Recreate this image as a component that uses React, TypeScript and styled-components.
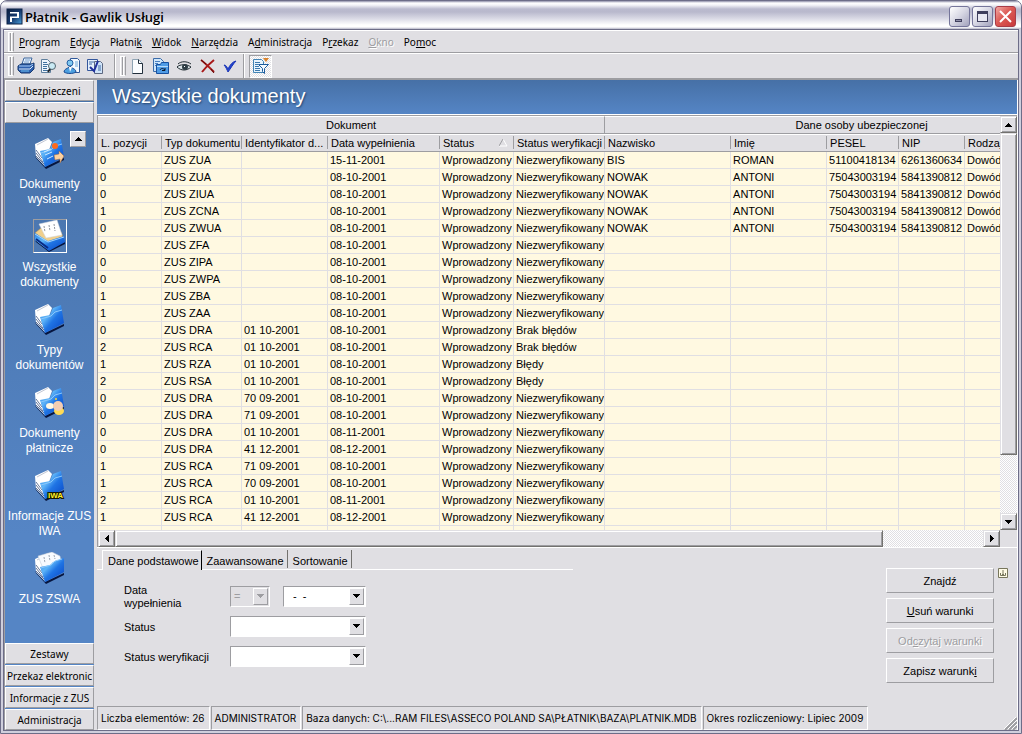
import React from "react";
import styled, { createGlobalStyle, css } from "styled-components";

const FACE = "#e0dfe3";
const SHADOW = "#9d9da1";
const FRAME = "#6d6d88";

const GlobalStyle = createGlobalStyle`
  * { box-sizing: border-box; }
  body {
    margin: 0;
    font: 11px/14px "Liberation Sans", Arial, sans-serif;
    color: #000;
    background: #fff;
  }
  button, input, select { font: inherit; color: inherit; margin: 0; padding: 0; border-radius: 0; }
`;

const raised = css`
  background: ${FACE};
  border: 1px solid;
  border-color: #fff ${SHADOW} ${SHADOW} #fff;
`;

const Frame = styled.div`
  min-height: 100vh;
  display: flex;
  flex-direction: column;
  border: 1px solid ${FRAME};
  border-radius: 7px 7px 0 0;
  background: #cfcfdd;
  overflow: hidden;
`;

const TitleBar = styled.header`
  display: flex;
  align-items: center;
  height: 28px;
  padding: 3px 5px 0 5px;
  gap: 2px;
  background: linear-gradient(#8e8ea8 0, #fff 2px, #f4f4f8 4px, #babace 8px, #b9b9cd 11px, #dcdce7 18px, #fff 24px, #fff 26px, #b5b5c6 28px);
`;

const Title = styled.h1`
  flex: 1;
  margin: 0;
  font: 600 13px/18px "Open Sans", sans-serif;
`;

const CaptionButton = styled.button<{ $close?: boolean }>`
  width: 21px;
  height: 21px;
  display: grid;
  place-items: center;
  border: 1px solid ${(p) => (p.$close ? "#a83c48" : "#75759a")};
  border-radius: 3px;
  background: ${(p) =>
    p.$close
      ? "linear-gradient(135deg, #f2a9a4, #dc5a55 45%, #c8393c)"
      : "linear-gradient(135deg, #fff, #d6d6e3 50%, #a2a2bc)"};
`;

const Client = styled.div`
  flex: 1;
  display: flex;
  flex-direction: column;
  margin: 0 2px 2px;
  border: 1px solid ${FRAME};
  background: ${FACE};
`;

const MenuBar = styled.nav`
  display: flex;
  align-items: center;
  height: 23px;
  padding-left: 4px;
  border-top: 1px solid #fff;
  border-bottom: 1px solid ${SHADOW};
`;

const MenuList = styled.div`
  display: flex;
  gap: 10px;
  padding-left: 5px;
`;

const MenuItem = styled.button`
  border: 0;
  background: none;
  height: 18px;
  font: 10px/18px "Noto Sans", sans-serif;
  &:disabled { color: ${SHADOW}; text-shadow: 1px 1px #fff; }
`;

const Grip = styled.span`
  width: 6px;
  height: 20px;
  border: 1px solid;
  border-color: #fff ${SHADOW} #fff #fff;
  background: linear-gradient(90deg, ${FACE} 0 1px, ${SHADOW} 1px 2px, #fff 2px 3px, ${FACE} 3px);
`;

const ToolBar = styled.div`
  display: flex;
  align-items: center;
  height: 27px;
  padding-left: 4px;
  border-top: 1px solid #fff;
  border-bottom: 2px solid ${SHADOW};
`;

const dither = css`
  background: repeating-conic-gradient(#fff 0 25%, ${FACE} 0 50%) 0 0 / 2px 2px;
`;

const ToolButton = styled.button<{ $on?: boolean }>`
  width: 23px;
  height: 23px;
  display: grid;
  place-items: center;
  border: 1px solid transparent;
  background: none;
  ${(p) =>
    p.$on &&
    css`
      ${dither}
      border-color: ${SHADOW} #fff #fff ${SHADOW};
    `}
`;

const ToolSeparator = styled.span<{ $before: number }>`
  width: 2px;
  height: 24px;
  margin: 0 4px 0 ${(p) => p.$before}px;
  border-left: 1px solid ${SHADOW};
  border-right: 1px solid #fff;
`;

const Body = styled.div`
  flex: 1;
  display: flex;
  gap: 3px;
  border-left: 1px solid ${SHADOW};
  border-right: 1px solid #fff;
`;

const Sidebar = styled.aside`
  width: 89px;
  flex: none;
  display: flex;
  flex-direction: column;
  gap: 1px;
  background: linear-gradient(#4771a8, #5585c5 70%);
`;

const SideTab = styled.button`
  ${raised}
  height: 21px;
  font: 10px/18px "Noto Sans", sans-serif;
  overflow: hidden;
  white-space: nowrap;
  text-align: center;
`;

const SideList = styled.div`
  position: relative;
  flex: 1;
  display: flex;
  flex-direction: column;
  gap: 12px;
  padding-top: 12px;
`;

const SideItem = styled.a<{ $selected?: boolean }>`
  display: flex;
  flex-direction: column;
  align-items: center;
  gap: 7px;
  color: #fff;
  text-decoration: none;
  text-align: center;
  font-size: 12px;
  line-height: 15px;
  white-space: pre-line;
  svg {
    border: 1px solid;
    border-color: ${(p) => (p.$selected ? "#9d9da1 #fff #fff #9d9da1" : "transparent")};
  }
`;

const ScrollUp = styled.button`
  ${raised}
  position: absolute;
  top: 7px;
  right: 8px;
  width: 16px;
  height: 16px;
  display: grid;
  place-items: center;
`;

const Main = styled.main`
  flex: 1;
  min-width: 0;
  display: flex;
  flex-direction: column;
`;

const Banner = styled.h2`
  margin: 0;
  height: 35px;
  padding-left: 15px;
  border-bottom: 1px solid #fff;
  background: linear-gradient(#4670a6, #5585c5);
  color: #fff;
  font-size: 20px;
  line-height: 32px;
  font-weight: 400;
  text-shadow: 1px 1px 2px #23456f;
`;

const GridPane = styled.section`
  flex: 1 1 0;
  min-height: 240px;
  display: grid;
  grid-template-columns: minmax(0, 1fr) 17px;
  grid-template-rows: minmax(0, 1fr) 17px;
  border-top: 1px solid ${SHADOW};
  border-left: 1px solid ${SHADOW};
`;

const Viewport = styled.div`
  overflow: hidden;
  background: #fff9e1;
`;

const DataTable = styled.table`
  width: 1021px;
  table-layout: fixed;
  border-collapse: separate;
  border-spacing: 0;
`;

const GroupHead = styled.th`
  height: 18px;
  padding: 0;
  font-weight: 400;
  line-height: 14px;
  background: ${FACE};
  border-top: 1px solid #fff;
  border-right: 1px solid ${SHADOW};
  border-bottom: 1px solid ${SHADOW};
`;

const Head = styled.th`
  height: 18px;
  padding: 0 0 0 3px;
  font-weight: 400;
  line-height: 14px;
  text-align: left;
  white-space: nowrap;
  overflow: hidden;
  border-bottom: 1px solid ${SHADOW};
  border-top: 1px solid #fff;
  background: linear-gradient(${SHADOW}, ${SHADOW}) right 0 top 1px / 1px 13px no-repeat ${FACE};
  svg { float: right; margin: 3px 6px 0 0; }
`;

const Cell = styled.td`
  height: 17px;
  padding: 0 0 0 2px;
  line-height: 16px;
  white-space: nowrap;
  overflow: hidden;
  background: #fff9e1;
  border-right: 1px solid ${FACE};
  border-bottom: 1px solid ${FACE};
`;

const ScrollBar = styled.div<{ $vertical?: boolean }>`
  display: flex;
  flex-direction: ${(p) => (p.$vertical ? "column" : "row")};
  ${dither}
`;

const scrollPart = css`
  background: ${FACE};
  border: 1px solid;
  border-color: ${FACE} #73726f #73726f ${FACE};
  box-shadow: inset 1px 1px #fff, inset -1px -1px ${SHADOW};
`;

const ScrollArrow = styled.button`
  ${scrollPart}
  width: 17px;
  height: 17px;
  flex: none;
  display: grid;
  place-items: center;
`;

const Thumb = styled.div<{ $share: number }>`
  ${scrollPart}
  flex: ${(p) => p.$share} 0 0;
`;

const Track = styled.div<{ $share: number }>`
  flex: ${(p) => p.$share} 0 0;
`;

const Panel = styled.section`
  display: flex;
  justify-content: space-between;
  min-height: 159px;
  border-top: 1px solid #fff;
`;

const Criteria = styled.div`
  width: 476px;
`;

const Tabs = styled.div`
  display: flex;
  align-items: flex-start;
  padding: 2px 0 0 5px;
  height: 22px;
  background: linear-gradient(#fff, #fff) left bottom / 100% 1px no-repeat;
`;

const Tab = styled.button<{ $active?: boolean }>`
  height: ${(p) => (p.$active ? 20 : 18)}px;
  padding: 3px 3px 0 5px;
  border: 0;
  border-right: 1px solid ${(p) => (p.$active ? "#000" : "#73726f")};
  background: ${FACE};
  ${(p) =>
    p.$active &&
    css`
      border-top: 1px solid #fff;
      border-left: 1px solid #fff;
      padding: 1px 2px 0 5px;
    `}
`;

const Form = styled.form`
  display: grid;
  grid-template-columns: 106px 136px;
  grid-auto-rows: 20px;
  row-gap: 10px;
  align-items: center;
  padding: 16px 0 0 27px;
`;

const FieldLabel = styled.label`
  padding-top: 2px;
  line-height: 13px;
  white-space: pre-line;
`;

const FieldRow = styled.div`
  display: flex;
  justify-content: space-between;
`;

const Combo = styled.span<{ $width: number; $disabled?: boolean }>`
  display: flex;
  width: ${(p) => p.$width}px;
  height: 21px;
  padding: 1px;
  border: 1px solid;
  border-color: ${SHADOW} #fff #fff ${SHADOW};
  background: ${(p) => (p.$disabled ? FACE : "#fff")};
  position: relative;
  select, input {
    flex: 1;
    width: 100%;
    min-width: 0;
    appearance: none;
    border: 0;
    outline: 0;
    padding-left: 2px;
    background: transparent;
    color: ${(p) => (p.$disabled ? SHADOW : "#000")};
    opacity: 1;
  }
  input { padding-left: 8px; }
`;

const DropMark = styled.span`
  ${raised}
  position: absolute;
  top: 1px;
  right: 1px;
  bottom: 1px;
  width: 15px;
  display: grid;
  place-items: center;
  pointer-events: none;
`;

const Actions = styled.div`
  display: flex;
  gap: 4px;
  padding: 20px 9px 0 0;
`;

const ButtonStack = styled.div`
  display: flex;
  flex-direction: column;
  gap: 5px;
`;

const PushButton = styled.button`
  ${raised}
  width: 108px;
  height: 25px;
  &:disabled { color: ${SHADOW}; text-shadow: 1px 1px #fff; }
`;

const PinButton = styled.button`
  width: 10px;
  height: 11px;
  border: 0;
  background: none;
  display: block;
  svg { display: block; }
`;

const StatusBar = styled.footer`
  display: flex;
  gap: 1px;
  height: 24px;
  font: 10px/22px Inter, sans-serif;
  white-space: nowrap;
`;

const StatusCell = styled.span`
  padding: 0 4px 0 3px;
  border: 1px solid;
  border-color: ${SHADOW} #fff #fff ${SHADOW};
`;

const SizeGrip = styled.svg`
  margin: auto 0 0 auto;
`;

type Dir = "up" | "down" | "left" | "right";
const arrows: Record<Dir, [number, number, string]> = {
  up: [7, 4, "M3 0h1v1h1v1h1v1h1v1H0V3h1V2h1V1h1z"],
  down: [7, 4, "M0 0h7v1H6v1H5v1H4v1H3V3H2V2H1V1H0z"],
  left: [4, 7, "M4 0v7H3V6H2V5H1V4H0V3h1V2h1V1h1V0z"],
  right: [4, 7, "M0 0h1v1h1v1h1v1h1v1H3v1H2v1H1v1H0z"],
};

const Arrow = ({ dir, color = "#000" }: { dir: Dir; color?: string }) => {
  const [w, h, d] = arrows[dir];
  return (
    <svg width={w} height={h} viewBox={`0 0 ${w} ${h}`} shapeRendering="crispEdges">
      <path d={d} fill={color} />
    </svg>
  );
};

const Icon16 = ({ children }: { children: React.ReactNode }) => (
  <svg width="18" height="18" viewBox="0 0 18 18" fill="none">
    {children}
  </svg>
);

const AppLogo = () => (
  <svg width="17" height="17" viewBox="0 0 17 17">
    <defs>
      <linearGradient id="logo" x1="0" y1="0" x2="1" y2="1">
        <stop offset="0" stopColor="#0b1c3c" />
        <stop offset="0.5" stopColor="#16396d" />
        <stop offset="1" stopColor="#4aa0dc" />
      </linearGradient>
    </defs>
    <rect x="1" y="1" width="15" height="15" fill="url(#logo)" stroke="#0d2347" />
    <path d="M4 4h9v6H6v4H4V8.500h7V5.500H4z" fill="#fff" />
  </svg>
);

const PrinterIcon = () => (
  <Icon16>
    <path d="M5 7 7 1h8l-2 6z" fill="#e8f1fb" stroke="#3c669d" />
    <path d="M8 3h5M7 5h5" stroke="#77a0d0" />
    <path d="M1 9 4 7h10l3-1v6l-4 4H4l-3-3z" fill="#2d5fae" stroke="#17396f" />
    <path d="M2 9h11l3-2" stroke="#a9cdf5" />
    <path d="M2 12h11l3-3" stroke="#dcebfb" />
    <path d="M4 14h8" stroke="#6ec0ee" />
  </Icon16>
);

const PreviewIcon = () => (
  <Icon16>
    <path d="M1.500 2.500h6l3 3v10h-9z" fill="#eef5fc" stroke="#5f7f9d" />
    <path d="M3 5.500h4M3 7.500h5M3 9.500h4M3 11.500h4M3 13.500h5" stroke="#41719f" />
    <circle cx="12" cy="9" r="3.500" fill="#c9eaf4" stroke="#52646e" />
    <path d="m10 12-2 3" stroke="#222" strokeWidth="2" />
  </Icon16>
);

const PersonIcon = () => (
  <Icon16>
    <path d="M7.500 1.500h7l2 2v12h-9z" fill="#f3f9ff" stroke="#31599a" />
    <path d="M12 5h3M12 7h3M12 9h3" stroke="#6ea8d8" />
    <circle cx="7" cy="6" r="3" fill="#7fc8f1" stroke="#2460a4" />
    <path d="M1 15c0-3 3-3 5-5h2c2 2 5 2 5 5-3 2-9 2-12 0z" fill="#4b9fe0" stroke="#1d4c91" />
    <path d="m6 10 1 5 2-5" fill="#fff" />
  </Icon16>
);

const CheckedDocIcon = () => (
  <Icon16>
    <path d="M1.500 2.500h10v11h-10z" fill="#e2eefb" stroke="#34579c" />
    <path d="M8.500 4.500h6l2 2v10h-8z" fill="#cfe3f8" stroke="#5c6780" />
    <path d="M3 5h5M3 7h3M12 9h3M12 11h3M12 13h3" stroke="#426aa6" />
    <path d="m4 10 4 4 4-10" stroke="#20309b" strokeWidth="2" />
  </Icon16>
);

const NewIcon = () => (
  <Icon16>
    <path d="M3.500 2.500h6l4 4v10h-10z" fill="#fbfdff" stroke="#8fa4b4" />
    <path d="M9.500 2.500v4h4v10h-10" stroke="#222f3c" />
  </Icon16>
);

const FolderDocIcon = () => (
  <Icon16>
    <path d="M1.500 1.500h7l3 3v10h-10z" fill="#cfe6fa" stroke="#3b6caa" />
    <path d="M3 4.500h5M3 6.500h3M3 8.500h3" stroke="#477fc0" />
    <path d="M4.500 7.500h4l1-2h7v11h-12z" fill="#4f9ce6" stroke="#17509f" />
    <path d="M5 9.500h11" stroke="#b5dbfb" />
    <path d="M8 13c1-2 3-2 5 0m0-2v2.500h-3" stroke="#08172d" />
  </Icon16>
);

const EyeIcon = () => (
  <Icon16>
    <path d="M3 7c3-3 9-3 13 0" stroke="#222d33" />
    <path d="M2 10c3-3 10-3 14 0-4 4-10 4-14 0z" fill="#dce5e8" stroke="#222d33" />
    <circle cx="10" cy="10" r="3" fill="#2e3d45" />
    <path d="M9 9h1v1H9z" fill="#fff" />
  </Icon16>
);

const DeleteIcon = () => (
  <Icon16>
    <path d="M3 3c4 3 9 8 13 12M16 3C11 7 7 11 4 15" stroke="#a81818" strokeWidth="2" />
    <path d="m3 3 5 4M16 16l-3-4" stroke="#5b0909" />
  </Icon16>
);

const CheckIcon = () => (
  <Icon16>
    <path d="M3 8c2 0 3 2 4 4 2-4 4-7 8-8-3 3-5 7-8 11-1-2-2-5-4-7z" fill="#2345d0" stroke="#1a35b6" />
  </Icon16>
);

const FilterIcon = () => (
  <Icon16>
    <path d="M1.500 2.500h8l2 2v11h-10z" fill="#e8f4fd" stroke="#4284b5" />
    <path d="M3 5.500h5M3 7.500h3M3 9.500h4M3 11.500h5M3 13.500h5" stroke="#3b79ad" />
    <path d="M6.500 7.500h10l-4 4v5l-2-2v-3z" fill="#f5fbff" stroke="#1c5b9c" />
    <path d="M11 1h6l-3 4z" fill="#d9822c" />
  </Icon16>
);

type FolderKind = "sent" | "all" | "types" | "pay" | "iwa" | "zswa";

const FolderIcon = ({ kind }: { kind: FolderKind }) => (
  <svg width="34" height="34" viewBox="0 0 32 32" fill="none">
    <defs>
      <linearGradient id={`f-${kind}`} x1="0" y1="0" x2="1" y2="1">
        <stop offset="0" stopColor="#2f86e6" />
        <stop offset="0.35" stopColor="#5db4f8" />
        <stop offset="0.55" stopColor="#1f74e4" />
        <stop offset="1" stopColor="#0642c4" />
      </linearGradient>
    </defs>
    {kind === "all" ? (
      <>
        <path d="m1 20 13 10 17-8v2l-16 8L2 22z" fill="#05133c" />
        <path d="m1 13 6-5 20 4 2 5-15 6z" fill="#f0cf8c" stroke="#b98d45" strokeWidth="0.5" />
        <path d="m5 4 18-4 5 15-16 3z" fill="#fff" stroke="#cfd4dc" strokeWidth="0.5" />
        <path d="m10 6 1 6m4-7 1 6m4-7 1 7" stroke="#8f959e" strokeDasharray="2 1" />
        <path d="m1 13 13 8 16-5 1 6-16 9L1 20z" fill="url(#f-all)" />
        <path d="m1 14 13 8 16-5" stroke="#a5d4fb" />
        <path d="m2 19 12 9" stroke="#0a2c85" strokeWidth="2" />
      </>
    ) : (
      <>
        <path d="m1 19 10 11 19-9v2l-18 9L2 21z" fill="#06153f" />
        <path d="m1 7 13-6 4 4-3 8-8 3 4 13-9-9z" fill="#fff" />
        <path d="m2 13 6 8M2 16l7 9M2 19l8 8" stroke="#66779a" />
        <path d="m3 8 11-6" stroke="#c3c8d4" />
        {kind === "zswa" && (
          <>
            <path d="m4 4 14-4 8 4 2 10-18 5z" fill="#f8fbff" stroke="#bcc4d0" strokeWidth="0.5" />
            <path d="m10 5 1 6m4-8 1 6m4-6 1 4" stroke="#9aa4b2" strokeDasharray="2 1" />
          </>
        )}
        {kind === "zswa" ? (
          <path d="m6 15 10-2 3-3 11-4v14l-19 10z" fill="url(#f-zswa)" />
        ) : (
          <path d="m6 14 10-2 3-7 8-3 3 18-19 10z" fill={`url(#f-${kind})`} />
        )}
        <path d="m7 16 10-3 4-4 7-2" stroke="#8cc8fb" />
      </>
    )}
    {kind === "sent" && (
      <>
        <circle cx="21" cy="9" r="3" fill="#ff6a1c" />
        <path d="m10 15 7-3M11 18l7-3M13 22l6-3" stroke="#cfe9ff" />
        <path d="m20 18 5-1v-3l5 5-4 7v-4l-5 1z" fill="#fbd1a0" stroke="#a46a3d" strokeWidth="0.5" />
      </>
    )}
    {kind === "pay" && (
      <>
        <ellipse cx="16" cy="20" rx="4" ry="3" fill="#fff8e4" />
        <ellipse cx="25" cy="25" rx="5" ry="4" fill="#ffdb55" />
        <circle cx="24" cy="20" r="5" fill="#f3cdb3" />
        <circle cx="22" cy="13" r="1" fill="#ffd83a" />
      </>
    )}
    {kind === "iwa" && (
      <text x="14" y="29" fill="#ffef2b" stroke="#171700" strokeWidth="2" paintOrder="stroke" fontSize="8" fontWeight="700">
        IWA
      </text>
    )}
  </svg>
);

const menu: [string, string, string][] = [
  ["", "P", "rogram"],
  ["", "E", "dycja"],
  ["Płatni", "k", ""],
  ["", "W", "idok"],
  ["", "N", "arzędzia"],
  ["A", "d", "ministracja"],
  ["P", "r", "zekaz"],
  ["", "O", "kno"],
  ["Po", "m", "oc"],
];

const sideItems: [string, FolderKind][] = [
  ["Dokumenty\nwysłane", "sent"],
  ["Wszystkie\ndokumenty", "all"],
  ["Typy\ndokumentów", "types"],
  ["Dokumenty\npłatnicze", "pay"],
  ["Informacje ZUS\nIWA", "iwa"],
  ["ZUS ZSWA", "zswa"],
];

const columns: [string, number][] = [
  ["L. pozycji", 64],
  ["Typ dokumentu", 80],
  ["Identyfikator d...", 86],
  ["Data wypełnienia", 112],
  ["Status", 74],
  ["Status weryfikacji", 91],
  ["Nazwisko", 126],
  ["Imię", 96],
  ["PESEL", 72],
  ["NIP", 66],
  ["Rodzaj", 154],
];

const W = "Wprowadzony";
const N = "Niezweryfikowany";
const nowak = ["NOWAK", "ANTONI", "75043003194", "5841390812", "Dowód"];
const none = ["", "", "", "", ""];

const rows: string[][] = [
  ["0", "ZUS ZUA", "", "15-11-2001", W, N, "BIS", "ROMAN", "51100418134", "6261360634", "Dowód"],
  ["0", "ZUS ZUA", "", "08-10-2001", W, N, ...nowak],
  ["0", "ZUS ZIUA", "", "08-10-2001", W, N, ...nowak],
  ["1", "ZUS ZCNA", "", "08-10-2001", W, N, ...nowak],
  ["0", "ZUS ZWUA", "", "08-10-2001", W, N, ...nowak],
  ["0", "ZUS ZFA", "", "08-10-2001", W, N, ...none],
  ["0", "ZUS ZIPA", "", "08-10-2001", W, N, ...none],
  ["0", "ZUS ZWPA", "", "08-10-2001", W, N, ...none],
  ["1", "ZUS ZBA", "", "08-10-2001", W, N, ...none],
  ["1", "ZUS ZAA", "", "08-10-2001", W, N, ...none],
  ["0", "ZUS DRA", "01 10-2001", "08-10-2001", W, "Brak błędów", ...none],
  ["2", "ZUS RCA", "01 10-2001", "08-10-2001", W, "Brak błędów", ...none],
  ["1", "ZUS RZA", "01 10-2001", "08-10-2001", W, "Błędy", ...none],
  ["2", "ZUS RSA", "01 10-2001", "08-10-2001", W, "Błędy", ...none],
  ["0", "ZUS DRA", "70 09-2001", "08-10-2001", W, N, ...none],
  ["0", "ZUS DRA", "71 09-2001", "08-10-2001", W, N, ...none],
  ["0", "ZUS DRA", "01 10-2001", "08-11-2001", W, N, ...none],
  ["0", "ZUS DRA", "41 12-2001", "08-12-2001", W, N, ...none],
  ["1", "ZUS RCA", "71 09-2001", "08-10-2001", W, N, ...none],
  ["1", "ZUS RCA", "70 09-2001", "08-10-2001", W, N, ...none],
  ["2", "ZUS RCA", "01 10-2001", "08-11-2001", W, N, ...none],
  ["1", "ZUS RCA", "41 12-2001", "08-12-2001", W, N, ...none],
  ["2", "ZUS RCA", "01 10-2001", "08-11-2001", W, N, ...none],
];

const statusTexts = [
  "Liczba elementów: 26",
  "ADMINISTRATOR",
  "Baza danych: C:\\...RAM FILES\\ASSECO POLAND SA\\PŁATNIK\\BAZA\\PLATNIK.MDB",
  "Okres rozliczeniowy: Lipiec 2009",
];

export default function App() {
  return (
    <Frame>
      <GlobalStyle />
      <TitleBar>
        <AppLogo />
        <Title>Płatnik - Gawlik Usługi</Title>
        <CaptionButton aria-label="Minimalizuj">
          <svg width="13" height="13" viewBox="0 0 13 13" shapeRendering="crispEdges">
            <path d="M2 9h7v3H2z" fill="#3f3f5c" />
            <path d="M3 10h5v1H3z" fill="#8f8fa8" />
          </svg>
        </CaptionButton>
        <CaptionButton aria-label="Maksymalizuj">
          <svg width="13" height="13" viewBox="0 0 13 13" shapeRendering="crispEdges">
            <path d="M1 1h11v11H1zM2 4v7h9V4z" fill="#3f3f5c" fillRule="evenodd" />
            <path d="M2 4h9v7H2z" fill="#e9e9f2" />
          </svg>
        </CaptionButton>
        <CaptionButton $close aria-label="Zamknij">
          <svg width="13" height="13" viewBox="0 0 13 13">
            <path d="m1 1 11 11M12 1 1 12" stroke="#fff" strokeWidth="2" />
          </svg>
        </CaptionButton>
      </TitleBar>
      <Client>
        <MenuBar>
          <Grip />
          <MenuList>
            {menu.map(([before, key, after]) => (
              <MenuItem key={before + key + after} disabled={after === "kno"}>
                {before}
                <u>{key}</u>
                {after}
              </MenuItem>
            ))}
          </MenuList>
        </MenuBar>
        <ToolBar>
          <Grip />
          <ToolButton aria-label="Drukuj"><PrinterIcon /></ToolButton>
          <ToolButton aria-label="Podgląd"><PreviewIcon /></ToolButton>
          <ToolButton aria-label="Płatnik"><PersonIcon /></ToolButton>
          <ToolButton aria-label="Weryfikuj"><CheckedDocIcon /></ToolButton>
          <ToolSeparator $before={8} />
          <Grip />
          <ToolButton aria-label="Nowy"><NewIcon /></ToolButton>
          <ToolButton aria-label="Otwórz"><FolderDocIcon /></ToolButton>
          <ToolButton aria-label="Pokaż"><EyeIcon /></ToolButton>
          <ToolButton aria-label="Usuń"><DeleteIcon /></ToolButton>
          <ToolButton aria-label="Zatwierdź"><CheckIcon /></ToolButton>
          <ToolSeparator $before={2} />
          <ToolButton $on aria-label="Filtr"><FilterIcon /></ToolButton>
        </ToolBar>
        <Body>
          <Sidebar>
            <SideTab>Ubezpieczeni</SideTab>
            <SideTab>Dokumenty</SideTab>
            <SideList>
              {sideItems.map(([label, kind]) => (
                <SideItem key={kind} href="#" $selected={kind === "all"}>
                  <FolderIcon kind={kind} />
                  {label}
                </SideItem>
              ))}
              <ScrollUp aria-label="W górę"><Arrow dir="up" /></ScrollUp>
            </SideList>
            <SideTab>Zestawy</SideTab>
            <SideTab>Przekaz elektronic</SideTab>
            <SideTab>Informacje z ZUS</SideTab>
            <SideTab>Administracja</SideTab>
          </Sidebar>
          <Main>
            <Banner>Wszystkie dokumenty</Banner>
            <GridPane>
              <Viewport>
                <DataTable>
                  <colgroup>
                    {columns.map(([name, width]) => (
                      <col key={name} width={width} />
                    ))}
                  </colgroup>
                  <thead>
                    <tr>
                      <GroupHead colSpan={6}>Dokument</GroupHead>
                      <GroupHead colSpan={5}>Dane osoby ubezpieczonej</GroupHead>
                    </tr>
                    <tr>
                      {columns.map(([name]) => (
                        <Head key={name}>
                          {name === "Status" && (
                            <svg width="9" height="8" viewBox="0 0 9 8">
                              <path d="m4 0 4 7H0" fill="none" stroke="#fff" />
                              <path d="M4 0 0 7" stroke={SHADOW} />
                            </svg>
                          )}
                          {name}
                        </Head>
                      ))}
                    </tr>
                  </thead>
                  <tbody>
                    {rows.map((row, r) => (
                      <tr key={r}>
                        {row.map((value, c) => (
                          <Cell key={c}>{value}</Cell>
                        ))}
                      </tr>
                    ))}
                  </tbody>
                </DataTable>
              </Viewport>
              <ScrollBar $vertical>
                <ScrollArrow aria-label="W górę"><Arrow dir="up" /></ScrollArrow>
                <Thumb $share={322} />
                <Track $share={58} />
                <ScrollArrow aria-label="W dół"><Arrow dir="down" /></ScrollArrow>
              </ScrollBar>
              <ScrollBar>
                <ScrollArrow aria-label="W lewo"><Arrow dir="left" /></ScrollArrow>
                <Thumb $share={768} />
                <Track $share={100} />
                <ScrollArrow aria-label="W prawo"><Arrow dir="right" /></ScrollArrow>
              </ScrollBar>
            </GridPane>
            <Panel>
              <Criteria>
                <Tabs>
                  <Tab $active>Dane podstawowe</Tab>
                  <Tab>Zaawansowane</Tab>
                  <Tab>Sortowanie</Tab>
                </Tabs>
                <Form>
                  <FieldLabel htmlFor="date">{"Data\nwypełnienia"}</FieldLabel>
                  <FieldRow>
                    <Combo $width={40} $disabled>
                      <select disabled aria-label="Operator">
                        <option>=</option>
                      </select>
                      <DropMark><Arrow dir="down" color={SHADOW} /></DropMark>
                    </Combo>
                    <Combo $width={83}>
                      <input id="date" defaultValue="-  -" />
                      <DropMark><Arrow dir="down" /></DropMark>
                    </Combo>
                  </FieldRow>
                  <FieldLabel htmlFor="status">Status</FieldLabel>
                  <Combo $width={136}>
                    <select id="status" />
                    <DropMark><Arrow dir="down" /></DropMark>
                  </Combo>
                  <FieldLabel htmlFor="verification">Status weryfikacji</FieldLabel>
                  <Combo $width={136}>
                    <select id="verification" />
                    <DropMark><Arrow dir="down" /></DropMark>
                  </Combo>
                </Form>
              </Criteria>
              <Actions>
                <ButtonStack>
                  <PushButton>Znajdź</PushButton>
                  <PushButton><u>U</u>suń warunki</PushButton>
                  <PushButton disabled>Od<u>c</u>zytaj warunki</PushButton>
                  <PushButton>Zapisz warunk<u>i</u></PushButton>
                </ButtonStack>
                <PinButton aria-label="Przypnij">
                  <svg width="10" height="11" viewBox="0 0 10 11" fill="none">
                    <path d="M.5.5h9v9h-9z" fill="#fffbe6" stroke="#77765c" />
                    <path d="M5 2v5M2.500 5v2.500h5V5M4 6l1 1 1-1" stroke="#77765c" />
                  </svg>
                </PinButton>
              </Actions>
            </Panel>
            <StatusBar>
              {statusTexts.map((text) => (
                <StatusCell key={text}>{text}</StatusCell>
              ))}
              <SizeGrip width="13" height="13" viewBox="0 0 13 13">
                <path d="M1 13 13 1M5 13l8-8M9 13l4-4" stroke={SHADOW} strokeWidth="2" />
                <path d="M0 12 12 0M4 12l9-9M8 12l5-5" stroke="#fff" />
              </SizeGrip>
            </StatusBar>
          </Main>
        </Body>
      </Client>
    </Frame>
  );
}
